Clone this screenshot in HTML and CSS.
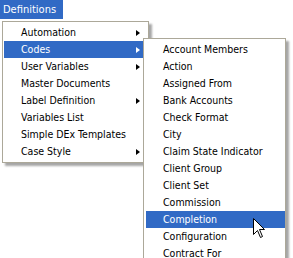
FILE: index.html
```html
<!DOCTYPE html>
<html>
<head>
<meta charset="utf-8">
<title>Definitions menu</title>
<link rel="stylesheet" href="styles.css">
</head>
<body>

<div class="menubar">
	<div class="top-item">Definitions</div>
</div>

<ul class="menu main-menu">
	<li class="item"><span>Automation</span><i class="arrow"></i></li>
	<li class="item active"><span>Codes</span><i class="arrow"></i></li>
	<li class="item"><span>User Variables</span><i class="arrow"></i></li>
	<li class="item"><span>Master Documents</span></li>
	<li class="item"><span>Label Definition</span><i class="arrow"></i></li>
	<li class="item"><span>Variables List</span></li>
	<li class="item"><span>Simple DEx Templates</span></li>
	<li class="item"><span>Case Style</span><i class="arrow"></i></li>
</ul>

<ul class="menu sub-menu">
	<li class="item"><span>Account Members</span></li>
	<li class="item"><span>Action</span></li>
	<li class="item"><span>Assigned From</span></li>
	<li class="item"><span>Bank Accounts</span></li>
	<li class="item"><span>Check Format</span></li>
	<li class="item"><span>City</span></li>
	<li class="item"><span>Claim State Indicator</span></li>
	<li class="item"><span>Client Group</span></li>
	<li class="item"><span>Client Set</span></li>
	<li class="item"><span>Commission</span></li>
	<li class="item active"><span>Completion</span></li>
	<li class="item"><span>Configuration</span></li>
	<li class="item"><span>Contract For</span></li>
</ul>

<svg class="cursor" width="13" height="21" viewBox="0 0 13 21">
	<path d="M0.5 0.5 L0.5 16.5 L4.5 12.5 L7.5 19.5 L9.5 18.5 L6.5 11.5 L11.5 11.5 Z" fill="#fff" stroke="#000" stroke-width="1"/>
</svg>

</body>
</html>
```

FILE: styles.css
```css
html,
body {
	margin: 0;
	background: #fff;
	overflow: hidden;
	height: 258px;
	font: 10.5px/17px "DejaVu Sans Condensed", "Liberation Sans", sans-serif;
	color: #000;
}

.menubar {
	display: flex;
	height: 19px;
}

.top-item {
	background: #316ac5;
	color: #fff;
	width: 60px;
	padding-left: 3px;
	line-height: 19px;
	font-size: 11px;
}

.menu {
	position: absolute;
	margin: 0;
	list-style: none;
	background: #fff;
	border: 1px solid #aca899;
	box-shadow: 3px 3px 2px rgba(0, 0, 0, .35);
}

.main-menu {
	left: 2px;
	top: 21px;
	width: 143px;
	padding: 2px 1px;
}

.sub-menu {
	left: 143px;
	top: 38px;
	width: 139px;
	padding: 2px 0 2px 2px;
}

.item {
	display: flex;
	justify-content: space-between;
	align-items: center;
	height: 17px;
	padding: 0 7px 0 17px;
	white-space: nowrap;
}

.item.active {
	background: #316ac5;
	color: #fff;
}

.arrow {
	width: 0;
	height: 0;
	border-top: 3.5px solid transparent;
	border-bottom: 3.5px solid transparent;
	border-left: 4px solid #000;
}

.active .arrow {
	border-left-color: #fff;
}

.cursor {
	position: absolute;
	left: 253px;
	top: 218px;
}
```
